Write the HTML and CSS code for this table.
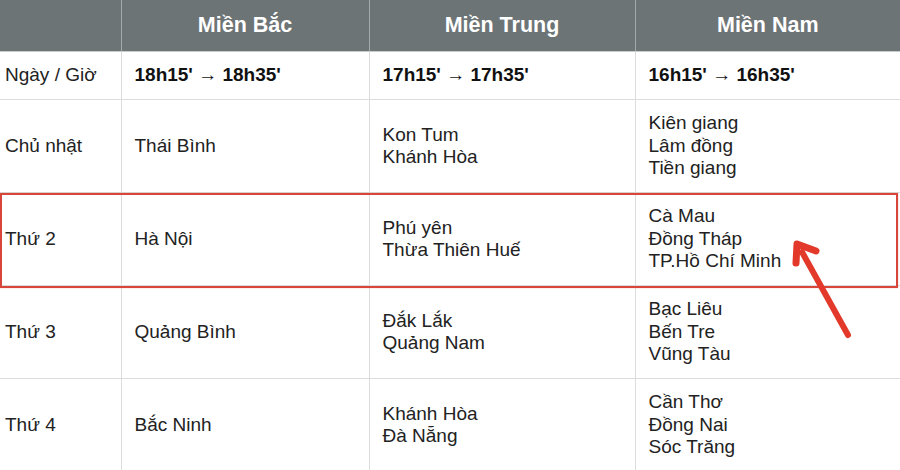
FILE: index.html
```html
<!DOCTYPE html>
<html lang="vi">
<head>
<meta charset="utf-8">
<title>Lịch quay xổ số</title>
<link rel="stylesheet" href="styles.css">
</head>
<body>
<div class="wrap">
  <table class="lich">
    <colgroup>
      <col class="c1"><col class="c2"><col class="c3"><col class="c4">
    </colgroup>
    <thead>
      <tr><th></th><th>Miền Bắc</th><th>Miền Trung</th><th>Miền Nam</th></tr>
    </thead>
    <tbody>
      <tr class="time">
        <td class="day">Ngày / Giờ</td>
        <td><b>18h15' → 18h35'</b></td>
        <td><b>17h15' → 17h35'</b></td>
        <td><b>16h15' → 16h35'</b></td>
      </tr>
      <tr>
        <td class="day">Chủ nhật</td>
        <td>Thái Bình</td>
        <td>Kon Tum<br>Khánh Hòa</td>
        <td>Kiên giang<br>Lâm đồng<br>Tiền giang</td>
      </tr>
      <tr>
        <td class="day">Thứ 2</td>
        <td>Hà Nội</td>
        <td>Phú yên<br>Thừa Thiên Huế</td>
        <td>Cà Mau<br>Đồng Tháp<br>TP.Hồ Chí Minh</td>
      </tr>
      <tr>
        <td class="day">Thứ 3</td>
        <td>Quảng Bình</td>
        <td>Đắk Lắk<br>Quảng Nam</td>
        <td>Bạc Liêu<br>Bến Tre<br>Vũng Tàu</td>
      </tr>
      <tr>
        <td class="day">Thứ 4</td>
        <td>Bắc Ninh</td>
        <td>Khánh Hòa<br>Đà Nẵng</td>
        <td>Cần Thơ<br>Đồng Nai<br>Sóc Trăng</td>
      </tr>
    </tbody>
  </table>
  <div class="highlight"></div>
  <svg class="arrow" width="900" height="470" viewBox="0 0 900 470">
    <line x1="848" y1="335" x2="802" y2="252" stroke="#e2392a" stroke-width="6" stroke-linecap="round"/>
    <polyline points="796,263 797,244 816,251" fill="none" stroke="#e2392a" stroke-width="7" stroke-linecap="round" stroke-linejoin="round"/>
  </svg>
</div>
</body>
</html>
```

FILE: styles.css
```css
html, body {
  margin: 0;
  padding: 0;
  background: #fff;
  overflow: hidden;
}
.wrap {
  position: relative;
  width: 900px;
  height: 470px;
  overflow: hidden;
}
.lich {
  border-collapse: collapse;
  table-layout: fixed;
  width: 900px;
  font-family: "Liberation Sans", Arial, sans-serif;
  font-size: 19px;
  line-height: 22.5px;
  color: #222;
}
.c1 { width: 121px; }
.c2 { width: 248px; }
.c3 { width: 266px; }
.c4 { width: 265px; }
.lich th {
  background: #6d7476;
  color: #fff;
  font-size: 21.5px;
  font-weight: bold;
  height: 51px;
  padding: 0;
  text-align: center;
  border-left: 1px solid #a3a8a9;
  border-bottom: 1px solid #c9cccd;
}
.lich th:first-child { border-left: none; }
.lich td {
  border-left: 1px solid #dcdcdc;
  border-bottom: 1px solid #dcdcdc;
  padding: 12px 12px 12px 13px;
  height: 68px;
  vertical-align: middle;
}
.lich td.day {
  border-left: none;
  padding-left: 5px;
}
.lich tr.time td {
  height: 23px;
  padding-top: 12px;
  padding-bottom: 12px;
}
.lich b { color: #111; }
.highlight {
  position: absolute;
  left: 0;
  top: 193px;
  width: 894px;
  height: 91px;
  border: 2px solid #d8453a;
  box-shadow: 0 0 1px rgba(216, 69, 58, 0.5);
}
.arrow {
  position: absolute;
  left: 0;
  top: 0;
}
```
